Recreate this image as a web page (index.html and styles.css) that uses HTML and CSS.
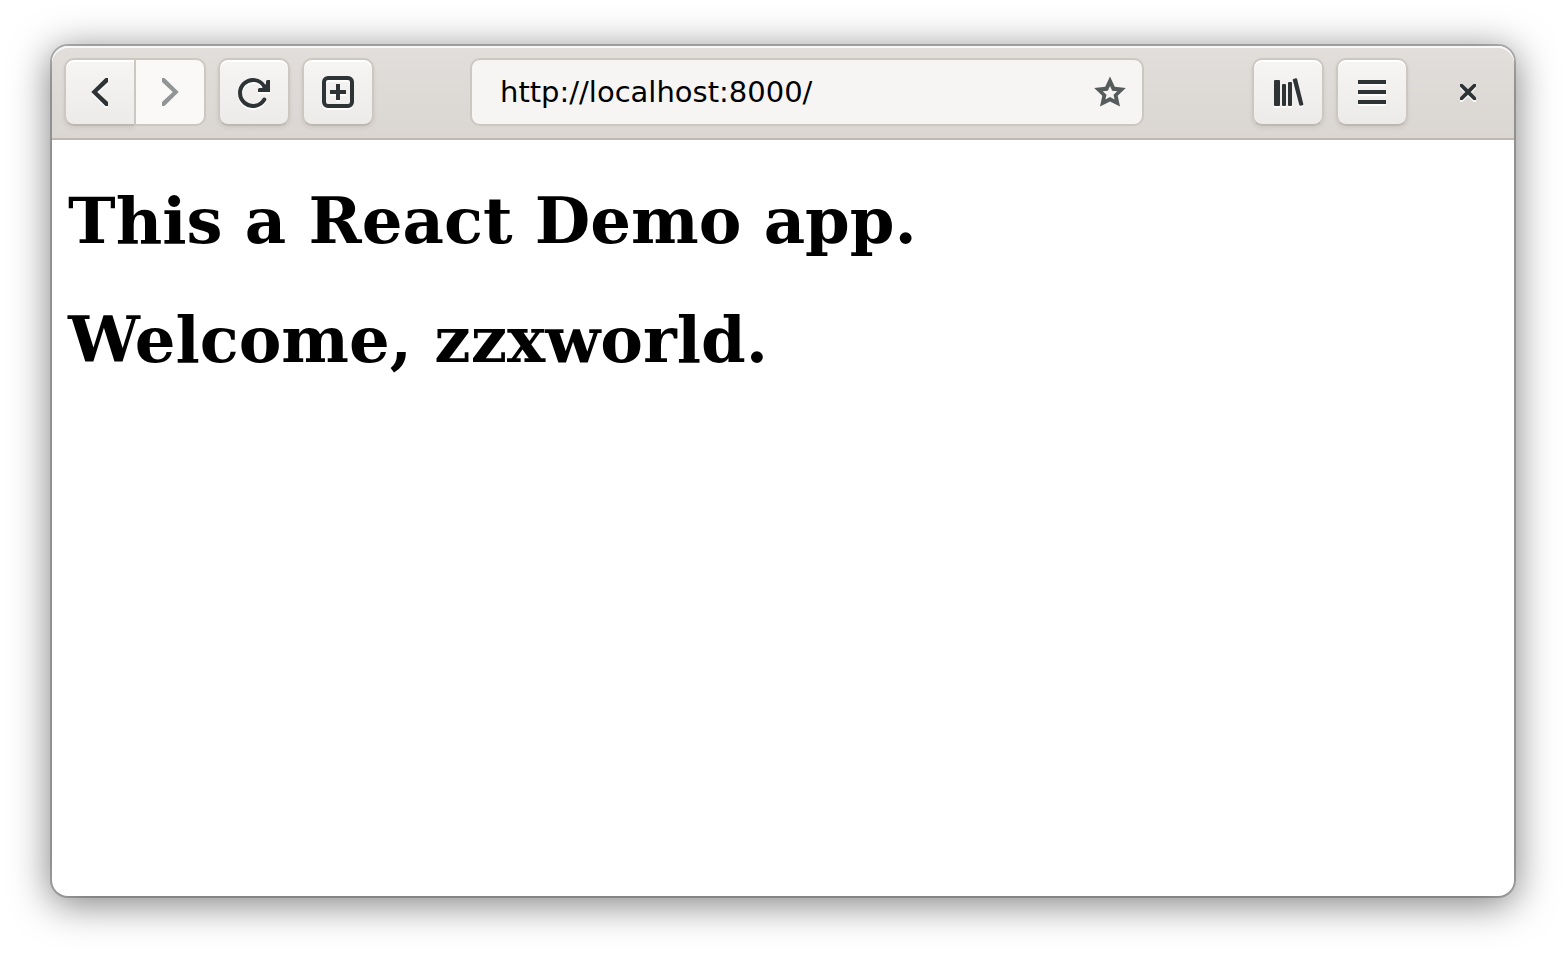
FILE: index.html
```html
<!DOCTYPE html>
<html lang="en">
<head>
<meta charset="utf-8">
<title>React Demo</title>
<link rel="stylesheet" href="styles.css">
</head>
<body>
<div class="window">
  <header class="headerbar">
    <nav class="history" aria-label="History">
      <button class="button" type="button" aria-label="Back">
        <svg class="icon" viewBox="0 0 32 32"><path d="M21.500 2H24v4L13.200 16 24 26v4h-2.500L7.300 16z" fill="currentColor"/></svg>
      </button>
      <button class="button" type="button" aria-label="Forward" disabled>
        <svg class="icon" viewBox="0 0 32 32"><path d="M10.500 2H8v4l10.800 10L8 26v4h2.500L24.700 16z" fill="currentColor"/></svg>
      </button>
    </nav>
    <button class="button" type="button" aria-label="Reload">
      <svg class="icon" viewBox="0 0 32 32"><path d="M26.300 23.500A13 13 0 1 1 26 10" fill="none" stroke="currentColor" stroke-width="4" stroke-linecap="round"/><path d="M29.500 4H32v12H20v-2.500q0-1.500 1.500-1.500H24l4-4V5.500Q28 4 29.500 4z" fill="currentColor"/></svg>
    </button>
    <button class="button" type="button" aria-label="New tab">
      <svg class="icon" viewBox="0 0 32 32"><rect x="2" y="2" width="28" height="28" rx="4" fill="none" stroke="currentColor" stroke-width="4"/><path d="M8 16h16M16 8v16" fill="none" stroke="currentColor" stroke-width="4"/></svg>
    </button>
    <div class="location">
      <input class="address" type="text" value="http://localhost:8000/" aria-label="Address" spellcheck="false">
      <button class="bookmark" type="button" aria-label="Bookmark this page">
        <svg class="icon" viewBox="0 0 32 32"><path fill="currentColor" fill-rule="evenodd" d="M16 .5 20.800 10.800 31.800 12l-8.100 7.700L26 30.500 16 25.500 6 30.500l2.300-10.800L.2 12l11-1.200zM16 10l-2.200 4.700-5.100.6 3.800 3.400-1.100 4.700 4.600-2.400 4.600 2.400-1.100-4.700 3.800-3.400-5.100-.6z"/></svg>
      </button>
    </div>
    <button class="button" type="button" aria-label="Library">
      <svg class="icon" viewBox="0 0 32 32" fill="currentColor"><rect x="2" y="4" width="6" height="26" rx="1"/><rect x="10" y="8" width="4" height="22" rx="1"/><rect x="16" y="6" width="4" height="24" rx="1"/><path d="m21.500 2.900 2.300-.6q1-.2 1.300.8l6.200 24.800q.3 1-.7 1.300l-2 .6q-1 .2-1.300-.8L20.800 4.200q-.3-1 .7-1.300z"/></svg>
    </button>
    <button class="button" type="button" aria-label="Menu">
      <svg class="icon" viewBox="0 0 32 32"><path d="M2 6h28M2 16h28M2 26h28" stroke="currentColor" stroke-width="4"/></svg>
    </button>
    <button class="close" type="button" aria-label="Close">
      <svg class="icon" viewBox="0 0 32 32"><path d="M8 8h2.500l5.500 5.300L21.500 8H24v2.500L18.700 16l5.300 5.500V24h-2.500L16 18.700 10.500 24H8v-2.500l5.300-5.500L8 10.500z" fill="currentColor"/></svg>
    </button>
  </header>
  <main class="page">
    <h1 class="heading">This a React Demo app.</h1>
    <h1 class="heading">Welcome, zzxworld.</h1>
  </main>
</div>
</body>
</html>
```
FILE: styles.css
```css
* {
  box-sizing: border-box;
}

body {
  display: flex;
  min-height: 100vh;
  margin: 0;
  padding: 46px 52px 58px;
  background: #fff;
}

.window {
  display: flex;
  flex: 1;
  flex-direction: column;
  min-width: 0;
  border-radius: 16px;
  background: #fff;
  box-shadow: 0 6px 38px 2px rgba(0, 0, 0, 0.5), 0 0 0 2px rgba(0, 0, 0, 0.23);
}

.headerbar {
  display: flex;
  gap: 12px;
  padding: 12px;
  border-bottom: 2px solid #bfb8b1;
  border-radius: 16px 16px 0 0;
  background: linear-gradient(to top, #dad6d2, #e1dedb);
  box-shadow: inset 0 2px #f9f8f8;
}

.history {
  display: flex;
}

.button {
  display: flex;
  align-items: center;
  justify-content: center;
  width: 72px;
  height: 68px;
  padding: 0;
  border: 2px solid #cdc7c2;
  border-bottom-color: #bfb8b1;
  border-radius: 10px;
  background: linear-gradient(to top, #edebe9, #f6f5f4);
  box-shadow: inset 0 2px #fff, 0 2px 4px rgba(0, 0, 0, 0.07);
  color: #2e3436;
}

.history .button:first-child {
  width: 70px;
  border-right: 0;
  border-radius: 10px 0 0 10px;
}

.history .button:last-child {
  border-radius: 0 10px 10px 0;
}

.button:disabled {
  border-color: #cdc7c2;
  background: #faf9f8;
  box-shadow: none;
  color: #929595;
}

.icon {
  display: block;
  flex: none;
  width: 32px;
  height: 32px;
  filter: drop-shadow(0 2px 0 rgba(255, 255, 255, 0.8));
}

.button:disabled .icon,
.bookmark .icon {
  filter: none;
}

.location {
  display: flex;
  flex: 1;
  align-items: center;
  height: 68px;
  min-width: 0;
  margin: 0 96px 0 84px;
  padding: 0 16px 0 28px;
  border: 2px solid #cdc7c2;
  border-radius: 10px;
  background: #f6f5f4;
}

.address {
  flex: 1;
  min-width: 0;
  padding: 0;
  border: 0;
  outline: 0;
  background: transparent;
  color: #000;
  font: 29px "DejaVu Sans", sans-serif;
}

.bookmark,
.close {
  padding: 0;
  border: 0;
  background: transparent;
  color: #565b5c;
}

.close {
  display: flex;
  align-items: center;
  justify-content: center;
  width: 68px;
  height: 68px;
  margin-left: 14px;
  color: #2e3436;
}

.page {
  flex: 1;
  padding: 0 16px;
}

.heading {
  margin: 43px 0;
  color: #000;
  font: bold 64px/76px "DejaVu Serif", serif;
}
```
